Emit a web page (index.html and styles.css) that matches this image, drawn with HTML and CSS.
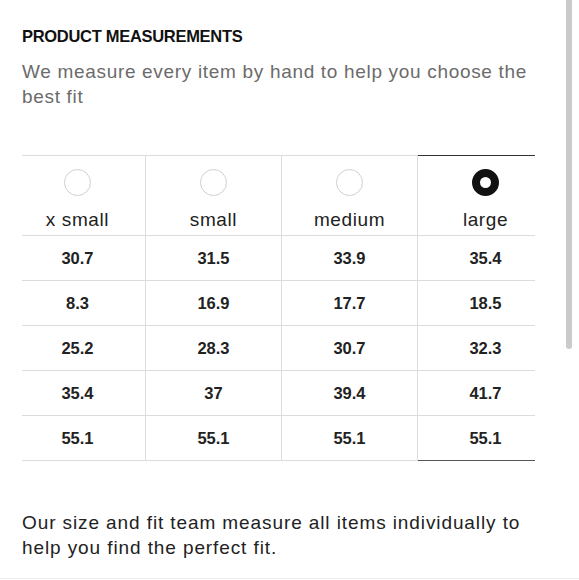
FILE: index.html
```html
<!DOCTYPE html>
<html lang="en">
<head>
<meta charset="utf-8">
<title>Product measurements</title>
<link rel="stylesheet" href="styles.css">
</head>
<body>
<main class="page">
  <h2 class="title">PRODUCT MEASUREMENTS</h2>
  <p class="intro">We measure every item by hand to help you choose the best fit</p>
  <div class="table-wrap">
    <table class="sizes">
      <thead>
        <tr>
          <th><span class="radio"></span><span class="label">x small</span></th>
          <th><span class="radio"></span><span class="label">small</span></th>
          <th><span class="radio"></span><span class="label">medium</span></th>
          <th class="sel"><span class="radio on"></span><span class="label">large</span></th>
        </tr>
      </thead>
      <tbody>
        <tr><td>30.7</td><td>31.5</td><td>33.9</td><td class="sel">35.4</td></tr>
        <tr><td>8.3</td><td>16.9</td><td>17.7</td><td class="sel">18.5</td></tr>
        <tr><td>25.2</td><td>28.3</td><td>30.7</td><td class="sel">32.3</td></tr>
        <tr><td>35.4</td><td>37</td><td>39.4</td><td class="sel">41.7</td></tr>
        <tr class="last"><td>55.1</td><td>55.1</td><td>55.1</td><td class="sel">55.1</td></tr>
      </tbody>
    </table>
  </div>
  <p class="note">Our size and fit team measure all items individually to help you find the perfect fit.</p>
</main>
<div class="rule"></div>
<div class="scrollbar"></div>
</body>
</html>
```
FILE: styles.css
```css
html, body {
  margin: 0;
  padding: 0;
  background: #fff;
}
body {
  font-family: "Liberation Sans", Arial, sans-serif;
  color: #222;
  width: 579px;
  height: 580px;
  overflow: hidden;
  position: relative;
}
.page {
  padding: 0 22px;
}
.title {
  margin: 26px 0 0;
  font-size: 16.5px;
  line-height: 20px;
  font-weight: 700;
  letter-spacing: -0.3px;
  color: #111;
}
.intro {
  margin: 13px 0 0;
  font-size: 19px;
  line-height: 25px;
  color: #6b6b6b;
  letter-spacing: 0.68px;
  width: 520px;
}
.table-wrap {
  margin-top: 46px;
  width: 513px;
  overflow: hidden;
}
.sizes {
  border-collapse: collapse;
  margin-left: -12px;
  table-layout: fixed;
  width: 540px;
}
.sizes th,
.sizes td {
  width: 135px;
  border: 1px solid #dcdcdc;
  text-align: center;
  padding: 0;
}
.sizes th:first-child,
.sizes td:first-child {
  border-left: none;
}
.sizes th {
  height: 79px;
  vertical-align: top;
  font-weight: 400;
}
.sizes td {
  height: 44px;
  font-size: 16.5px;
  font-weight: 700;
  color: #222;
}
.sizes .sel {
  border-left: 1px solid #555;
}
.sizes th.sel {
  border-top: 1px solid #333;
}
.sizes .last .sel {
  border-bottom: 1px solid #555;
}
.radio {
  display: block;
  width: 27px;
  height: 27px;
  box-sizing: border-box;
  border: 1px solid #cfcfcf;
  border-radius: 50%;
  margin: 13px auto 0;
  background: #fff;
}
.radio.on {
  border: 8px solid #111;
}
.label {
  display: block;
  margin-top: 11px;
  font-size: 19px;
  line-height: 25px;
  color: #222;
  letter-spacing: 0.6px;
}
.note {
  margin: 49px 0 0;
  font-size: 19px;
  line-height: 25px;
  color: #222;
  letter-spacing: 0.9px;
  width: 524px;
}
.rule {
  position: absolute;
  left: 0;
  right: 0;
  top: 578px;
  border-top: 1px solid #eee;
}
.scrollbar {
  position: absolute;
  top: 0;
  left: 566px;
  width: 6px;
  height: 349px;
  background: #cbcbcb;
  border-radius: 0 0 3px 3px;
}
```
